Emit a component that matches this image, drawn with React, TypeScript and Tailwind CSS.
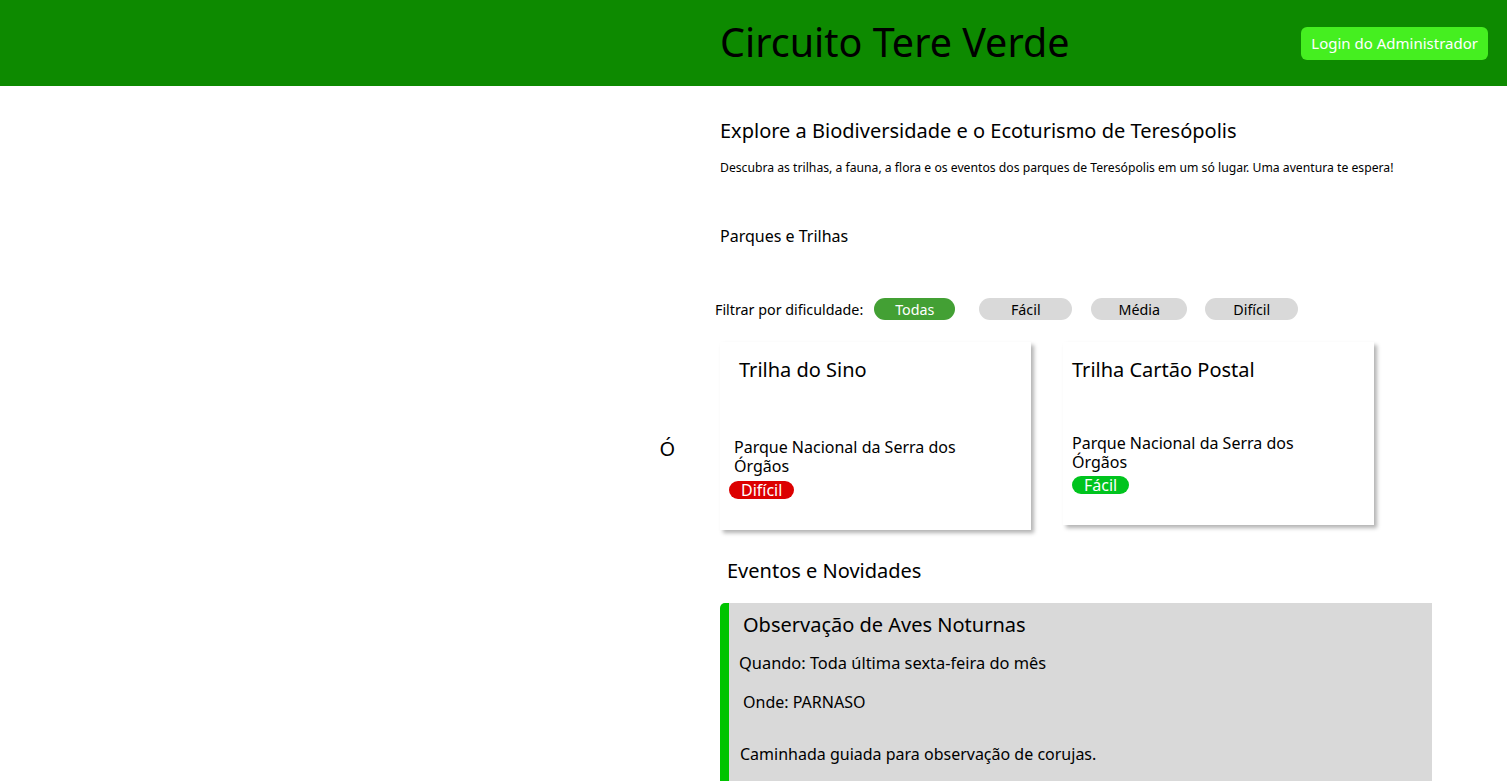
import React from 'react';

const trails = [
  { name: 'Trilha do Sino', park: 'Parque Nacional da Serra dos Órgãos', level: 'Difícil' },
  { name: 'Trilha Cartão Postal', park: 'Parque Nacional da Serra dos Órgãos', level: 'Fácil' },
];

const filters = [
  { label: 'Todas', cls: 'w-[81px] bg-[#43a034] text-white' },
  { label: 'Fácil', cls: 'w-[93px] ml-[24px] bg-[#d9d9d9] text-black' },
  { label: 'Média', cls: 'w-[96px] ml-[19px] bg-[#d9d9d9] text-black' },
  { label: 'Difícil', cls: 'w-[93px] ml-[18px] bg-[#d9d9d9] text-black' },
];

function LevelBadge({ level }: { level: string }) {
  const color = level === 'Difícil' ? 'bg-[#dc0000]' : 'bg-[#00c41e]';
  return (
    <span className={`inline-block ${color} text-white rounded-full px-[12px] text-[16px] leading-[18px] w-fit`}>
      {level}
    </span>
  );
}

export default function App() {
  return (
    <div className="min-h-screen bg-white text-black font-['Noto_Sans',sans-serif]">
      <header className="h-[86px] bg-[#0d8a00] flex items-center">
        <div className="w-[720px]" />
        <h1 className="flex-1 text-[39.5px] leading-none">Circuito Tere Verde</h1>
        <button className="mr-[19px] bg-[#45ef20] text-white text-[15px] rounded-[6px] px-[10px] h-[33px]">
          Login do Administrador
        </button>
      </header>

      <main className="flex">
        <div className="w-[720px] flex justify-end pr-[45px] pt-[348px]">
          <span className="text-[20px]">Ó</span>
        </div>

        <div className="flex-1 pt-[32px]">
          <h2 className="text-[20px] leading-[26px]">Explore a Biodiversidade e o Ecoturismo de Teresópolis</h2>
          <p className="text-[12.2px] mt-[15px]">
            Descubra as trilhas, a fauna, a flora e os eventos dos parques de Teresópolis em um só lugar. Uma aventura te espera!
          </p>

          <h3 className="text-[16px] mt-[47px]">Parques e Trilhas</h3>

          <div className="flex items-center mt-[50px] -ml-[5px] text-[14.3px]">
            <span className="mr-[11px]">Filtrar por dificuldade:</span>
            <div className="flex">
              {filters.map((f) => (
                <button key={f.label} className={`h-[22px] rounded-full ${f.cls}`}>
                  {f.label}
                </button>
              ))}
            </div>
          </div>

          <div className="flex gap-[32px] mt-[22px]">
            {trails.map((t, i) => (
              <div
                key={t.name}
                className={`w-[311px] bg-white shadow-[3px_3px_4px_rgba(0,0,0,0.3)] flex flex-col ${
                  i === 0 ? 'h-[188px] pl-[19px]' : 'h-[183px] pl-[9px]'
                }`}
              >
                <h4 className="text-[20px] mt-[13px]">{t.name}</h4>
                <div className={`flex flex-col ${i === 0 ? '-ml-[5px] mt-[53px]' : 'mt-[49px]'}`}>
                  <p className="text-[16px] leading-[19px] w-[245px]">{t.park}</p>
                  <div className={i === 0 ? '-ml-[5px] mt-[2px]' : 'mt-[1px]'}>
                    <LevelBadge level={t.level} />
                  </div>
                </div>
              </div>
            ))}
          </div>

          <h3 className="text-[20px] ml-[7px] mt-[26px]">Eventos e Novidades</h3>

          <div className="mt-[17px] w-[712px] bg-[#d9d9d9] border-l-[9px] border-[#00c400] rounded-l-[5px] pb-[20px]">
            <h4 className="text-[20px] ml-[14px] pt-[7px]">Observação de Aves Noturnas</h4>
            <p className="text-[16.4px] ml-[10px] mt-[11px]">Quando: Toda última sexta-feira do mês</p>
            <p className="text-[16px] ml-[14px] mt-[14px]">Onde: PARNASO</p>
            <p className="text-[16px] ml-[11px] mt-[28px]">Caminhada guiada para observação de corujas.</p>
          </div>
        </div>
      </main>
    </div>
  );
}
